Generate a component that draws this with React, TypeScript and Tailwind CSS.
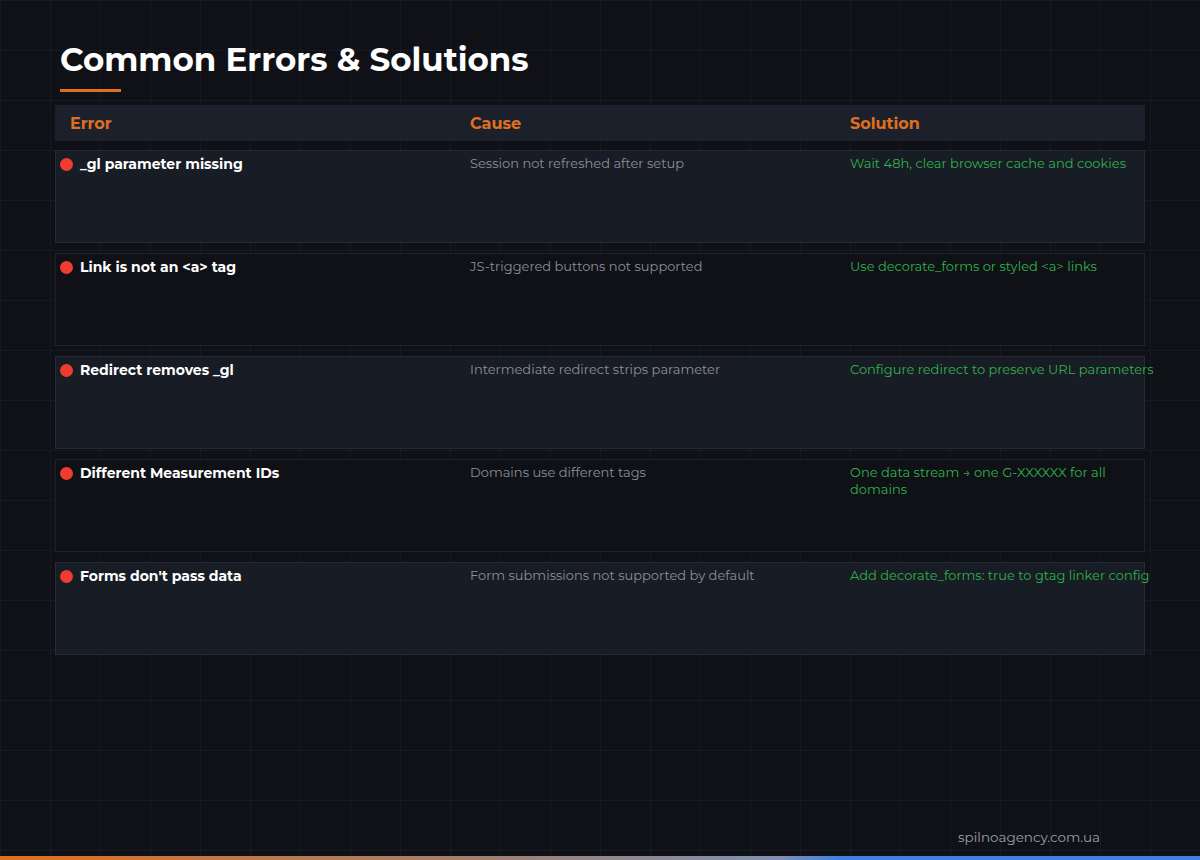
export default function App() {
  const rows = [
    ["_gl parameter missing", "Session not refreshed after setup", "Wait 48h, clear browser cache and cookies"],
    ["Link is not an <a> tag", "JS-triggered buttons not supported", "Use decorate_forms or styled <a> links"],
    ["Redirect removes _gl", "Intermediate redirect strips parameter", "Configure redirect to preserve URL parameters"],
    ["Different Measurement IDs", "Domains use different tags", "One data stream → one G-XXXXXX for all domains"],
    ["Forms don't pass data", "Form submissions not supported by default", "Add decorate_forms: true to gtag linker config"],
  ];
  return (
    <div
      className="relative w-[1200px] h-[860px] overflow-hidden bg-[#0f1117]"
      style={{
        fontFamily: "Montserrat, 'DejaVu Sans', sans-serif",
        backgroundImage:
          "linear-gradient(rgba(40,48,66,0.25) 1px, transparent 1px), linear-gradient(90deg, rgba(40,48,66,0.25) 1px, transparent 1px)",
        backgroundSize: "50px 50px",
      }}
    >
      <div className="pt-[40px] px-[55px]">
        <h1 className="ml-[5px] text-[32.5px] leading-[40px] font-bold text-white">Common Errors &amp; Solutions</h1>
        <div className="ml-[5px] mt-[9px] w-[61px] h-[3px] bg-[#e07020]" />
        <div className="mt-[13px] h-[36px] pt-[2px] bg-[#1c202b] flex items-center text-[16px] font-bold text-[#e07020]">
          <div className="w-[400px] pl-[15px]">Error</div>
          <div className="w-[380px] pl-[15px]">Cause</div>
          <div className="pl-[15px]">Solution</div>
        </div>
        <div className="mt-[9px] flex flex-col gap-[10px]">
          {rows.map((r, i) => (
            <div
              key={i}
              className={`h-[93px] flex items-start pt-[4px] border ${i % 2 === 0 ? "bg-[#181c25] border-[#232b3a]" : "bg-[#0f1117] border-[#1e222c]"}`}
            >
              <div className="w-[400px] flex items-center pl-[4px] text-[14px] font-bold text-white leading-[18px]">
                <span className="w-[13px] h-[13px] rounded-full bg-[#f03c30] mr-[7px]" />
                {r[0]}
              </div>
              <div className="w-[380px] pl-[14px] text-[13px] text-[#8a8f99] leading-[17px]">{r[1]}</div>
              <div className="w-[300px] pl-[14px] text-[13px] text-[#2fb04a] leading-[17px]">
                {i === 3 ? r[2] : <span className="whitespace-nowrap">{r[2]}</span>}
              </div>
            </div>
          ))}
        </div>
      </div>
      <div className="absolute right-[100px] bottom-[13px] text-[13.5px] text-[#9a9ea8]">spilnoagency.com.ua</div>
      <div className="absolute left-0 bottom-0 w-full h-[4px]" style={{ background: "linear-gradient(90deg,#e07020 0%,#a08070 40%,#8090b0 65%,#4080e0 70%,#4080e0 100%)" }} />
    </div>
  );
}
